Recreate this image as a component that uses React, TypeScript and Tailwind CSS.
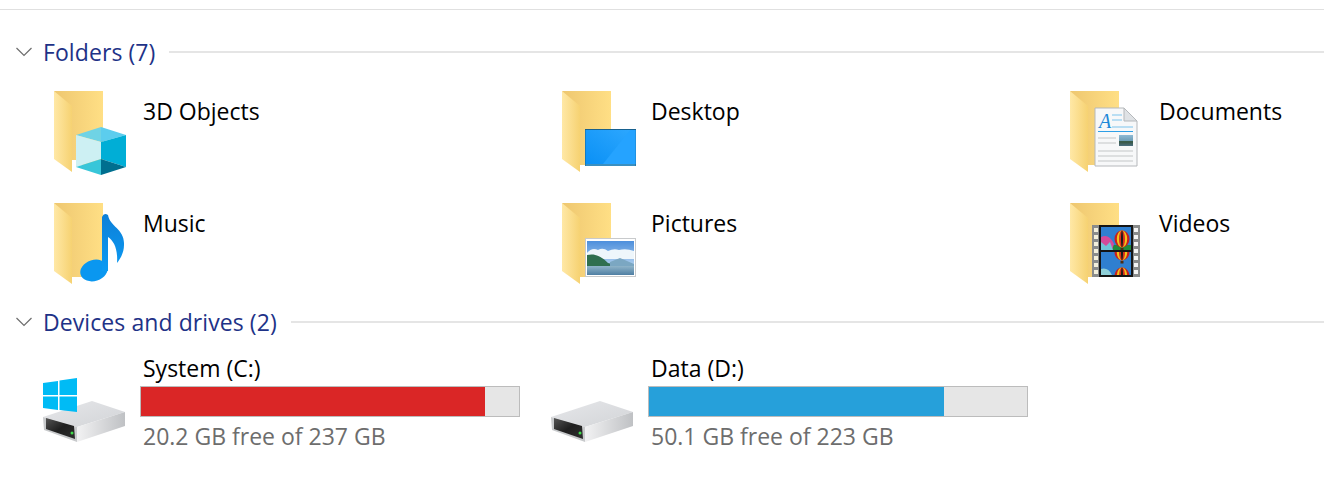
const font = "font-['Open_Sans','Noto_Sans',sans-serif]";

function Chevron() {
  return (
    <svg width="18" height="12" viewBox="0 0 18 12" className="ml-[15px] mr-[10px]">
      <path d="M1.5 2 L9 9.5 L16.5 2" fill="none" stroke="#6d6d6d" strokeWidth="1.2" />
    </svg>
  );
}

function GroupHeader({ title }: { title: string }) {
  return (
    <div className="flex items-center h-[26px]">
      <Chevron />
      <span className="text-[23px] leading-[26px] tracking-[0.08px] text-[#1e3287] whitespace-nowrap">{title}</span>
      <div className="flex-1 h-[2px] bg-[#e5e5e5] ml-[14px]" />
    </div>
  );
}

function FolderIcon({ children }: { children?: React.ReactNode }) {
  return (
    <svg width="96" height="96" viewBox="0 0 96 96" className="shrink-0">
      <defs>
        <linearGradient id="back" x1="0" y1="0" x2="1" y2="0">
          <stop offset="0" stopColor="#eec770" />
          <stop offset="1" stopColor="#ffdf85" />
        </linearGradient>
        <linearGradient id="flap" x1="0" y1="0" x2="1" y2="0">
          <stop offset="0" stopColor="#ffe8a6" />
          <stop offset="1" stopColor="#f6d272" />
        </linearGradient>
        <linearGradient id="sky" x1="0" y1="0" x2="0" y2="1">
          <stop offset="0" stopColor="#4d8fdc" />
          <stop offset="1" stopColor="#d5e8f5" />
        </linearGradient>
        <linearGradient id="water" x1="0" y1="0" x2="0" y2="1">
          <stop offset="0" stopColor="#8fb4c9" />
          <stop offset="1" stopColor="#4f7fa3" />
        </linearGradient>
        <linearGradient id="screen" x1="0" y1="1" x2="1" y2="0">
          <stop offset="0" stopColor="#0a90f5" />
          <stop offset="1" stopColor="#2ea8ff" />
        </linearGradient>
        <linearGradient id="note" x1="0" y1="0" x2="0" y2="1">
          <stop offset="0" stopColor="#0d7fd8" />
          <stop offset="1" stopColor="#0b9bf3" />
        </linearGradient>
        <linearGradient id="thumb" x1="0" y1="0" x2="0" y2="1">
          <stop offset="0" stopColor="#8fbad4" />
          <stop offset="0.5" stopColor="#6f9fb8" />
          <stop offset="0.6" stopColor="#35553f" />
          <stop offset="1" stopColor="#4d6f80" />
        </linearGradient>
      </defs>
      <path d="M14 6 H63 V80 H32 Z" fill="url(#back)" />
      <path d="M14 6 L32 21 V87 L14 74 Z" fill="url(#flap)" />
      {children}
    </svg>
  );
}

function Cube() {
  return (
    <g>
      <rect x="32" y="75" width="5" height="9" fill="#fff" />
      <path d="M36 50 L61 42 V57 Z" fill="#6fd3e5" />
      <path d="M61 42 L86 50 L61 57 Z" fill="#5ccdee" />
      <path d="M36 50 L61 57 V74 L36 82 Z" fill="#cdf0f3" />
      <path d="M61 57 L86 50 V82 L61 74 Z" fill="#00aed6" />
      <path d="M36 82 L61 74 V90 Z" fill="#38c6d9" />
      <path d="M61 74 L86 82 L61 90 Z" fill="#006f8f" />
    </g>
  );
}

function Screen() {
  return (
    <g>
      <rect x="37" y="44" width="51" height="37" fill="#17618f" />
      <rect x="37.5" y="45" width="50" height="34" fill="url(#screen)" />
      <path d="M55 79 L82 45 H87.5 V79 Z" fill="#25a3ff" />
      <rect x="37.5" y="79" width="50" height="2" fill="#3a8fc0" />
    </g>
  );
}

function Page() {
  return (
    <g>
      <path d="M39 23 H68 L81 36 V81 H39 Z" fill="#f7f8f9" stroke="#b5b8bb" />
      <path d="M68 23 V36 H81 Z" fill="#dfe2e5" stroke="#b5b8bb" />
      <text x="43" y="43" fontSize="20" fontStyle="italic" fontFamily="'Liberation Serif', serif" fill="#1e88d8">A</text>
      <path d="M56 30 H66 M56 35 H66 M56 42 H77" stroke="#7cc4ee" strokeWidth="1.2" />
      <path d="M42 46.5 H77" stroke="#2e9fe6" strokeWidth="1.2" />
      <path d="M42 53 H60 M42 58 H60 M42 66 H77 M42 71 H77 M42 76 H77" stroke="#c3c5c7" strokeWidth="1.2" />
      <rect x="63" y="50" width="14" height="11" fill="url(#thumb)" />
    </g>
  );
}

function Note() {
  return (
    <g>
      <ellipse cx="54" cy="73.5" rx="14" ry="10.5" transform="rotate(-18 54 73.5)" fill="#0a97f0" />
      <path
        d="M62 74 V20 Q64 15 68 18 C70 30 85 32 84 48 C84 56 80 62 77 66 C78 52 74 44 68 40 V74 Z"
        fill="url(#note)"
      />
    </g>
  );
}

function Photo() {
  return (
    <g>
      <rect x="37.5" y="41.5" width="50" height="38" fill="#fff" stroke="#c8cacc" />
      <rect x="39" y="44" width="47" height="34" fill="url(#sky)" />
      <path d="M39 56 Q44 50 50 53 Q55 50 60 54 Q66 51 71 53 Q78 51 86 54 V62 H39 Z" fill="#eef6fb" />
      <path d="M39 58 C48 56 54 60 60 66 L72 69 H39 Z" fill="#2f6f4f" />
      <path d="M62 65 L72 61 L86 67 V69 H62 Z" fill="#7ba7c2" />
      <rect x="39" y="69" width="47" height="9" fill="url(#water)" />
    </g>
  );
}

function Balloon({ cx, cy }: { cx: number; cy: number }) {
  return (
    <g>
      <ellipse cx={cx} cy={cy} rx="7.5" ry="8.5" fill="#c81e1e" />
      <ellipse cx={cx} cy={cy} rx="5.2" ry="8.5" fill="#f2c31a" />
      <ellipse cx={cx} cy={cy} rx="3" ry="8.5" fill="#d8301c" />
      <ellipse cx={cx} cy={cy} rx="1" ry="8.5" fill="#1a1a1a" />
      <rect x={cx - 1.5} y={cy + 9} width="3" height="2.5" fill="#4a2c14" />
    </g>
  );
}

function Film() {
  const holes = [31, 38, 45, 52, 59, 66, 73];
  return (
    <g>
      <rect x="36" y="28" width="48" height="52" fill="#8a8c8c" />
      <rect x="43" y="28" width="34" height="52" fill="#151515" />
      {holes.map((y) => (
        <g key={y}>
          <rect x="38" y={y} width="4" height="4" fill="#f2efdc" />
          <rect x="78" y={y} width="4" height="4" fill="#f5f5f5" />
        </g>
      ))}
      <svg x="45" y="30" width="30" height="23" viewBox="45 30 30 23">
        <rect x="45" y="30" width="30" height="23" fill="#2f7fd0" />
        <rect x="45" y="48" width="30" height="5" fill="#1f8a3c" />
        <path d="M45 40 Q53 36 58 47 L56 53 H45 Z" fill="#d44a9a" />
        <path d="M45 45 L50 49 L54 45 L57 53 H45 Z" fill="#6fc4d8" />
        <Balloon cx={66} cy={42} />
      </svg>
      <svg x="45" y="55" width="30" height="23" viewBox="45 55 30 23">
        <rect x="45" y="55" width="30" height="23" fill="#2f7fd0" />
        <Balloon cx={66} cy={55} />
        <Balloon cx={66} cy={79} />
        <path d="M45 72 Q52 70 56 78 H45 Z" fill="#8fd0d8" />
      </svg>
    </g>
  );
}

function DriveIcon({ windows }: { windows?: boolean }) {
  return (
    <svg width="96" height="88" viewBox="0 0 96 88" className="shrink-0 mt-[10px]">
      <defs>
        <linearGradient id="driveTop" x1="0" y1="0" x2="1" y2="1">
          <stop offset="0" stopColor="#e6e7ea" />
          <stop offset="1" stopColor="#d2d4d7" />
        </linearGradient>
        <linearGradient id="driveSide" x1="0" y1="0" x2="1" y2="0">
          <stop offset="0" stopColor="#f2f2f3" />
          <stop offset="1" stopColor="#bfc1c4" />
        </linearGradient>
        <linearGradient id="drivePanel" x1="0" y1="0" x2="1" y2="1">
          <stop offset="0" stopColor="#555555" />
          <stop offset="0.5" stopColor="#1f1f1f" />
          <stop offset="1" stopColor="#2e2e2e" />
        </linearGradient>
      </defs>
      <path d="M3 53 L52 37 L85 48 L37 63 Z" fill="url(#driveTop)" />
      <path d="M37 63 L85 48 V62 L37 78 Z" fill="url(#driveSide)" />
      <path d="M3 53 L37 63 V78 L4 66 Z" fill="#c8cacc" />
      <path d="M6 54 L34 62 L35 75 L6 65 Z" fill="url(#drivePanel)" />
      <circle cx="32" cy="69" r="1.5" fill="#3fdc4a" />
      {windows && (
        <g fill="#00bbf5">
          <path d="M3 19 L18 17 V31 H3 Z" />
          <path d="M19.5 16.5 L37 14 V31 H19.5 Z" />
          <path d="M3 32.5 H18 V46 L3 44 Z" />
          <path d="M19.5 32.5 H37 V48 L19.5 46 Z" />
        </g>
      )}
    </svg>
  );
}

function FolderItem({ name, children }: { name: string; children: React.ReactNode }) {
  return (
    <div className="flex h-[112px] w-[508px] pl-[40px]">
      <FolderIcon>{children}</FolderIcon>
      <span className="ml-[7px] mt-[10px] text-[23px] leading-[32px] text-black whitespace-nowrap">{name}</span>
    </div>
  );
}

function Drive({ name, free, used, color, windows }: { name: string; free: string; used: string; color: string; windows?: boolean }) {
  return (
    <div className="flex w-[508px] pl-[40px]">
      <DriveIcon windows={windows} />
      <div className="ml-1 w-[380px] shrink-0">
        <div className="pl-[3px] text-[23px] leading-[28px] text-black">{name}</div>
        <div className="mt-1 h-[31px] border border-[#bcbcbc] bg-[#e6e6e6]">
          <div className={`h-full ${used} ${color}`} />
        </div>
        <div className="mt-1 pl-[3px] text-[23px] leading-[30px] text-[#6d6d6d]">{free}</div>
      </div>
    </div>
  );
}

export default function App() {
  return (
    <div className={`w-[1324px] h-[488px] bg-white overflow-hidden ${font}`}>
      <div className="h-[10px] border-b border-[#e0e0e0]" />
      <div className="mt-[29px]">
        <GroupHeader title="Folders (7)" />
      </div>
      <div className="grid grid-cols-3 mt-[20px] w-[1524px]">
        <FolderItem name="3D Objects"><Cube /></FolderItem>
        <FolderItem name="Desktop"><Screen /></FolderItem>
        <FolderItem name="Documents"><Page /></FolderItem>
        <FolderItem name="Music"><Note /></FolderItem>
        <FolderItem name="Pictures"><Photo /></FolderItem>
        <FolderItem name="Videos"><Film /></FolderItem>
      </div>
      <GroupHeader title="Devices and drives (2)" />
      <div className="flex mt-[19px]">
        <Drive name="System (C:)" free="20.2 GB free of 237 GB" used="w-[344px]" color="bg-[#da2626]" windows />
        <Drive name="Data (D:)" free="50.1 GB free of 223 GB" used="w-[295px]" color="bg-[#26a0da]" />
      </div>
    </div>
  );
}
